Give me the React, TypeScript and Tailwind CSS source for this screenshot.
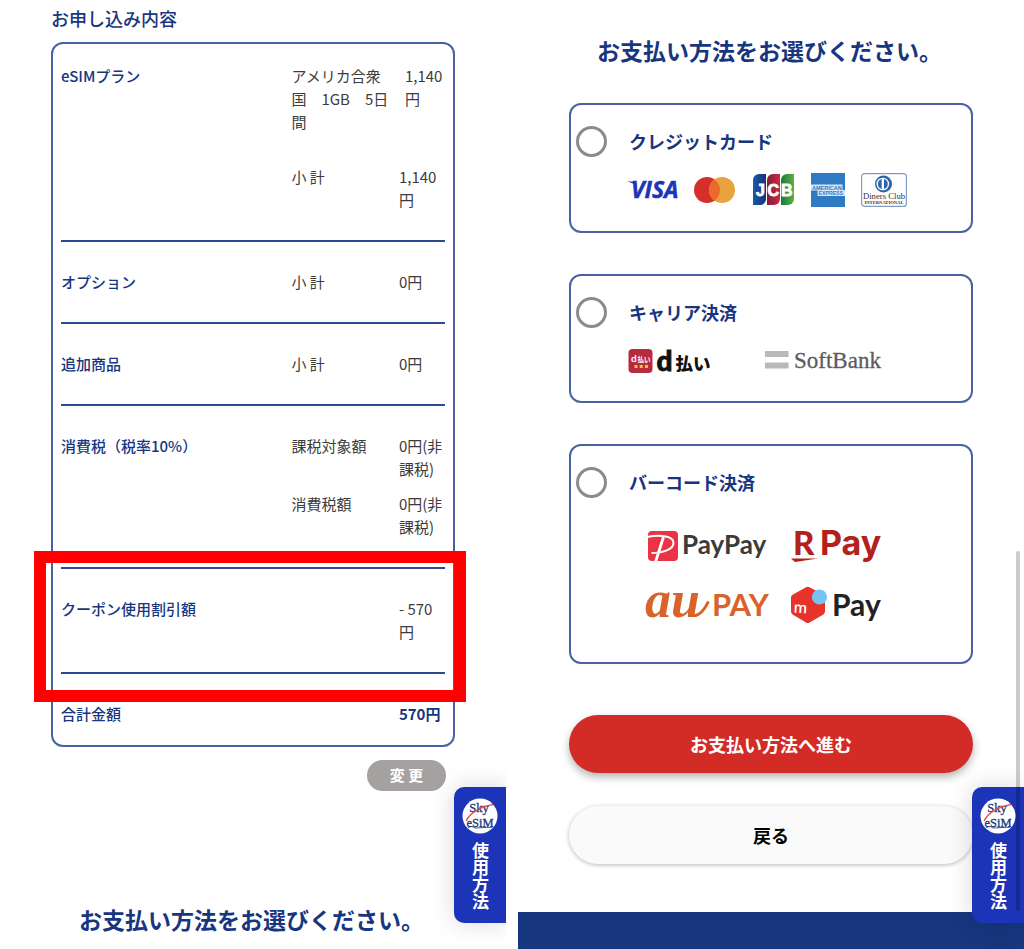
import React from "react";

const NAVY = "#17367f";

function SkyBadge() {
  return (
    <svg viewBox="0 0 36 36" className="size-9" aria-hidden="true">
      <circle cx="18" cy="18" r="17.5" fill="#fff" />
      <g fill={NAVY} stroke={NAVY} strokeWidth=".3" fontFamily="'Liberation Serif', serif" fontWeight="400" textAnchor="middle">
        <text x="17" y="14" fontSize="12.500">Sky</text>
        <text x="18" y="28.500" fontSize="12.500">eSiM</text>
      </g>
      <path d="M4 23C9 13.500 18 9 31 6.500" fill="none" stroke="#e2504f" strokeWidth="1.300" />
      <path d="M6 29.500c3-1.500 5-1 7 .5l17-.8" fill="none" stroke={NAVY} strokeWidth=".8" />
    </svg>
  );
}

function GuideTab() {
  return (
    <a
      href="#guide"
      className="absolute right-0 top-[787px] flex h-34 w-13 flex-col items-center rounded-l-[10px] bg-[#1c34b8] pt-[11px] text-[17px] font-bold text-white shadow-[0_0_24px_rgba(0,0,0,0.16)]"
    >
      <SkyBadge />
      <span className="mt-2 leading-5 [writing-mode:vertical-rl]">使用方法</span>
    </a>
  );
}

function Visa() {
  return (
    <svg viewBox="0 0 52 34" className="h-[34px] w-[52px] overflow-visible" role="img" aria-label="VISA">
      <path d="M0 8.500h8l2 5C7 10.500 4 9.300 0 8.500Z" fill="#1c34b8" />
      <text x="4" y="25" fontSize="23" fontWeight="700" fontStyle="italic" fontFamily="'Open Sans', sans-serif" fill="#1c34b8" stroke="#1c34b8" strokeWidth=".5">VISA</text>
    </svg>
  );
}

function Mastercard() {
  return (
    <svg viewBox="0 0 42 34" className="h-[34px] w-[42px] overflow-visible" role="img" aria-label="Mastercard">
      <circle cx="12" cy="17" r="13" fill="#d52e2b" />
      <circle cx="27" cy="17" r="13" fill="#e9a23e" />
      <path d="M19.500 6.400a13 13 0 0 1 0 21.200a13 13 0 0 1 0-21.200Z" fill="#ea6a2b" />
    </svg>
  );
}

function Jcb() {
  return (
    <svg viewBox="0 0 42 34" className="h-[34px] w-[42px]" role="img" aria-label="JCB">
      <defs>
        <linearGradient id="jb"><stop stopColor="#1a5aa6" /><stop offset="1" stopColor="#173375" /></linearGradient>
        <linearGradient id="jr"><stop stopColor="#7d1f3c" /><stop offset="1" stopColor="#d02740" /></linearGradient>
        <linearGradient id="jg"><stop stopColor="#1b7a3c" /><stop offset="1" stopColor="#5cb043" /></linearGradient>
      </defs>
      <path d="M6 1h7v25a6 6 0 0 1-6 6H0V7a6 6 0 0 1 6-6Z" fill="url(#jb)" />
      <path d="M20 1h7v25a6 6 0 0 1-6 6h-7V7a6 6 0 0 1 6-6Z" fill="url(#jr)" />
      <path d="M34 1h7v25a6 6 0 0 1-6 6h-7V7a6 6 0 0 1 6-6Z" fill="url(#jg)" />
      <g fill="#fff" fontFamily="'Liberation Sans', sans-serif" fontWeight="700" fontSize="16" stroke="#fff" strokeWidth=".8">
        <text x="3" y="22.500">J</text>
        <text x="14.500" y="22.500">C</text>
        <text x="28" y="22.500">B</text>
      </g>
    </svg>
  );
}

function Amex() {
  return (
    <svg viewBox="0 0 34 34" className="size-[34px] overflow-visible" role="img" aria-label="American Express">
      <path d="M0 0h34v34H0z" fill="#2f7bc3" />
      <path d="M0 11.500h31.500v5.500H34v6H6.500v-5.500H0z" fill="#d7e6f4" />
      <g fill="#2f7bc3" fontFamily="'Liberation Sans', sans-serif" fontWeight="700">
        <text x="1" y="16.500" fontSize="5.500">AMERICAN</text>
        <text x="7.500" y="22.300" fontSize="5.200">EXPRESS</text>
      </g>
    </svg>
  );
}

function Diners() {
  return (
    <svg viewBox="0 0 46 34" className="h-[34px] w-[46px]" role="img" aria-label="Diners Club International">
      <rect x=".6" y=".6" width="44.800" height="32.800" rx="3" fill="#fff" stroke="#7f9cc4" strokeWidth="1.200" />
      <circle cx="22.500" cy="11" r="8.500" fill="#2c66ad" />
      <circle cx="21.800" cy="11" r="6.300" fill="#fff" />
      <path d="M20.700 6a5.200 5.200 0 0 0 0 10ZM23 6a5.200 5.200 0 0 1 0 10Z" fill="#2c66ad" />
      <g fill="#33333a" fontFamily="'Liberation Serif', serif" textAnchor="middle">
        <text x="23" y="26" fontSize="8.700">Diners Club</text>
        <text x="23" y="31" fontSize="4.600" fontWeight="700">INTERNATIONAL</text>
      </g>
    </svg>
  );
}

function DPay() {
  return (
    <svg viewBox="0 0 84 32" className="h-8 w-[84px] overflow-visible" role="img" aria-label="d払い">
      <rect x="-.5" y="3" width="24" height="24" rx="4" fill="#b72c3c" />
      <g fill="#fff" fontWeight="700">
        <text x="2" y="16" fontSize="10" fontFamily="Lato, sans-serif">d</text>
        <text x="8.500" y="15.500" fontSize="6.500" fontFamily="'Noto Sans CJK JP', sans-serif">払い</text>
      </g>
      <path d="M5.500 19h3v3h-3zM10.700 19h3v3h-3zM15.900 19h3v3h-3z" fill="#f0c44c" />
      <g fill="#111" fontWeight="900">
        <text x="27.500" y="25" fontSize="28" fontFamily="Lato, sans-serif" stroke="#111" strokeWidth=".8">d</text>
        <text x="46.500" y="24" fontSize="17.500" fontFamily="'Noto Sans CJK JP', sans-serif">払い</text>
      </g>
    </svg>
  );
}

function SoftBank() {
  return (
    <svg viewBox="0 0 118 32" className="h-8 w-[118px] overflow-visible" role="img" aria-label="SoftBank">
      <path d="M0 5h23.500v6H0zM0 16.500h23.500v6H0z" fill="#b8b9bb" />
      <text x="29" y="21.500" fontSize="23" fontFamily="'Liberation Serif', serif" fill="#5b5b5d" stroke="#5b5b5d" strokeWidth=".3">SoftBank</text>
    </svg>
  );
}

function PayPay() {
  return (
    <svg viewBox="0 0 122 40" className="h-10 w-[122px]" role="img" aria-label="PayPay">
      <rect x="3" y="5" width="30" height="30" rx="4" fill="#ea3345" />
      <path d="M2 11C14 8.500 28 9.500 28.500 16.500c.3 7-11 10.500-22 10.500" fill="none" stroke="#fff" strokeWidth="2" />
      <path d="M18.500 11 10.500 36" fill="none" stroke="#fff" strokeWidth="2.800" />
      <text x="37" y="28" fontSize="26" fontWeight="700" fontFamily="Lato, sans-serif" fill="#3b3b3b">PayPay</text>
    </svg>
  );
}

function RakutenPay() {
  return (
    <svg viewBox="0 0 92 40" className="h-10 w-[92px] overflow-visible" role="img" aria-label="R Pay">
      <g fill="#b2211c">
        <text x="2" y="29" fontSize="33" fontWeight="900" fontFamily="Lato, sans-serif">R</text>
        <text x="29" y="29" fontSize="34" fontWeight="700" fontFamily="Inter, sans-serif">Pay</text>
      </g>
      <path d="M0 32.500h27l-23 3.500Z" fill="#b2211c" />
    </svg>
  );
}

function AuPay() {
  return (
    <svg viewBox="0 0 124 40" className="h-10 w-[124px] overflow-visible" role="img" aria-label="au PAY">
      <text x="0" y="31" fontSize="52" fontWeight="700" fontStyle="italic" fontFamily="'Liberation Serif', serif" fill="#d9632a">au</text>
      <path d="M48 29.500c6 1 11-5 15.500-14" fill="none" stroke="#d9632a" strokeWidth="2.800" />
      <text x="67" y="30" fontSize="31" fontWeight="700" fontFamily="Lato, sans-serif" fill="#d9632a">PAY</text>
    </svg>
  );
}

function MerPay() {
  return (
    <svg viewBox="0 0 92 40" className="h-10 w-[92px]" role="img" aria-label="m Pay">
      <path d="M15 1.200q1.800-1 3.600 0l13.800 7.600q1.600 1 1.600 2.800v14q0 1.800-1.600 2.800l-13.800 8q-1.800 1-3.600 0L1.600 28.400Q0 27.400 0 25.600v-14q0-1.800 1.600-2.800Z" fill="#e7332c" />
      <circle cx="28.500" cy="11" r="7.600" fill="#74c3f5" />
      <text x="2.500" y="27" fontSize="16" fontWeight="600" fontFamily="Lato, sans-serif" fill="#fff" transform="rotate(4 8 26)">m</text>
      <text x="41" y="29.500" fontSize="30" fontWeight="700" fontFamily="Lato, sans-serif" fill="#222">Pay</text>
    </svg>
  );
}

function SummaryPanel() {
  return (
    <section className="relative overflow-hidden bg-white px-[51px]">
      <h2 className="text-[18px] leading-9 font-medium text-[#17367f]">お申し込み内容</h2>
      <div className="mt-[6px] rounded-xl border-2 border-[#4863a3] px-2">
        <table className="w-full table-fixed border-collapse text-left text-[15px] leading-[23px] text-[#3c3c3c]">
          <colgroup>
            <col className="w-[60%]" />
            <col className="w-[28%]" />
            <col className="w-[12%]" />
          </colgroup>
          <tbody className="align-top [&_th]:font-medium [&_th]:text-[#17367f]">
            <tr>
              <th scope="row" className="pt-5">eSIMプラン</th>
              <td className="pt-5 pr-2">アメリカ合衆国　1GB　5日間</td>
              <td className="pt-5 pl-[6px]">1,140円</td>
            </tr>
            <tr className="border-b-2 border-[#2c4a92]">
              <td />
              <td className="pt-8 pb-[29px]">小 計</td>
              <td className="pt-8 pb-[29px]">1,140円</td>
            </tr>
            <tr className="border-b-2 border-[#2c4a92]">
              <th scope="row" className="pt-7 pb-[29px]">オプション</th>
              <td className="pt-7 pb-[29px]">小 計</td>
              <td className="pt-7 pb-[29px]">0円</td>
            </tr>
            <tr className="border-b-2 border-[#2c4a92]">
              <th scope="row" className="pt-7 pb-[29px]">追加商品</th>
              <td className="pt-7 pb-[29px]">小 計</td>
              <td className="pt-7 pb-[29px]">0円</td>
            </tr>
            <tr>
              <th scope="row" className="pt-7">消費税（税率10%）</th>
              <td className="pt-7">課税対象額</td>
              <td className="pt-7">0円(非課税)</td>
            </tr>
            <tr className="border-b-2 border-[#2c4a92]">
              <td />
              <td className="pt-3 pb-[29px]">消費税額</td>
              <td className="pt-3 pb-[29px]">0円(非課税)</td>
            </tr>
            <tr className="relative border-b-2 border-[#2c4a92]">
              <th scope="row" className="pt-7 pb-[29px]">
                クーポン使用割引額
                <span className="pointer-events-none absolute -top-[17px] -right-[21px] -bottom-[31px] -left-[27px] border-12 border-[#ff0000]" />
              </th>
              <td />
              <td className="pt-7 pb-[29px]">- 570円</td>
            </tr>
            <tr>
              <th scope="row" className="pt-7 pb-5">合計金額</th>
              <td />
              <td className="pt-7 pb-5 font-bold text-[#17367f]">570円</td>
            </tr>
          </tbody>
        </table>
      </div>
      <div className="mt-[13px] flex justify-end pr-[9px]">
        <button type="button" className="h-[31px] w-[79px] rounded-full bg-[#a5a1a1] text-[15px] font-bold text-white">変 更</button>
      </div>
      <h2 className="mt-[110px] pl-7 text-[23px] leading-9 font-bold whitespace-nowrap text-[#17367f]">お支払い方法をお選びください。</h2>
      <GuideTab />
    </section>
  );
}

function Method({ id, title, className, children }: { id: string; title: string; className: string; children: React.ReactNode }) {
  return (
    <div className={"flex items-start gap-[22px] rounded-xl border-2 border-[#4863a3] pl-[5px] " + className}>
      <input
        type="radio"
        id={id}
        name="method"
        className="mt-[21px] size-[31px] shrink-0 appearance-none rounded-full border-3 border-[#8b8b8e] bg-white checked:bg-[#17367f]"
      />
      <div>
        <label htmlFor={id} className="mt-[22px] block text-[18px] leading-7 font-bold text-[#17367f]">{title}</label>
        {children}
      </div>
    </div>
  );
}

function PaymentPanel() {
  return (
    <section className="relative flex flex-col overflow-hidden bg-white">
      <form className="px-[51px]">
        <h1 className="mt-8 pl-7 text-[23px] leading-9 font-bold whitespace-nowrap text-[#17367f]">お支払い方法をお選びください。</h1>
        <div className="mt-[35px] flex flex-col gap-[41px]">
          <Method id="card" title="クレジットカード" className="pb-6">
            <div className="-ml-[2px] mt-[18px] flex gap-4">
              <Visa />
              <Mastercard />
              <Jcb />
              <Amex />
              <Diners />
            </div>
          </Method>
          <Method id="carrier" title="キャリア決済" className="pb-[23px]">
            <div className="mt-5 flex gap-13">
              <DPay />
              <SoftBank />
            </div>
          </Method>
          <Method id="barcode" title="バーコード決済" className="pb-9">
            <div className="ml-4 mt-[30px] grid grid-cols-[auto_auto] justify-start gap-x-[22px] gap-y-5">
              <PayPay />
              <RakutenPay />
              <AuPay />
              <MerPay />
            </div>
          </Method>
        </div>
        <button type="submit" className="mt-[51px] block h-[58px] w-full rounded-full bg-[#d32c27] text-[18px] font-bold text-white shadow-[0_4px_8px_rgba(0,0,0,0.3)]">
          お支払い方法へ進む
        </button>
        <button type="button" className="mt-[33px] block h-[58px] w-full rounded-full bg-[#fafafa] text-[18px] font-bold text-black shadow-[0_1px_4px_rgba(0,0,0,0.28)]">
          戻る
        </button>
      </form>
      <footer className="mt-12 min-h-[37px] grow bg-[#17367f]" />
      <GuideTab />
      <div className="absolute top-[551px] right-1 h-[360px] w-1 rounded-full bg-black/20" />
    </section>
  );
}

export default function App() {
  return (
    <main className="grid min-h-screen grid-cols-2 gap-3 bg-white font-['Noto_Sans_CJK_JP',sans-serif]">
      <SummaryPanel />
      <PaymentPanel />
    </main>
  );
}
